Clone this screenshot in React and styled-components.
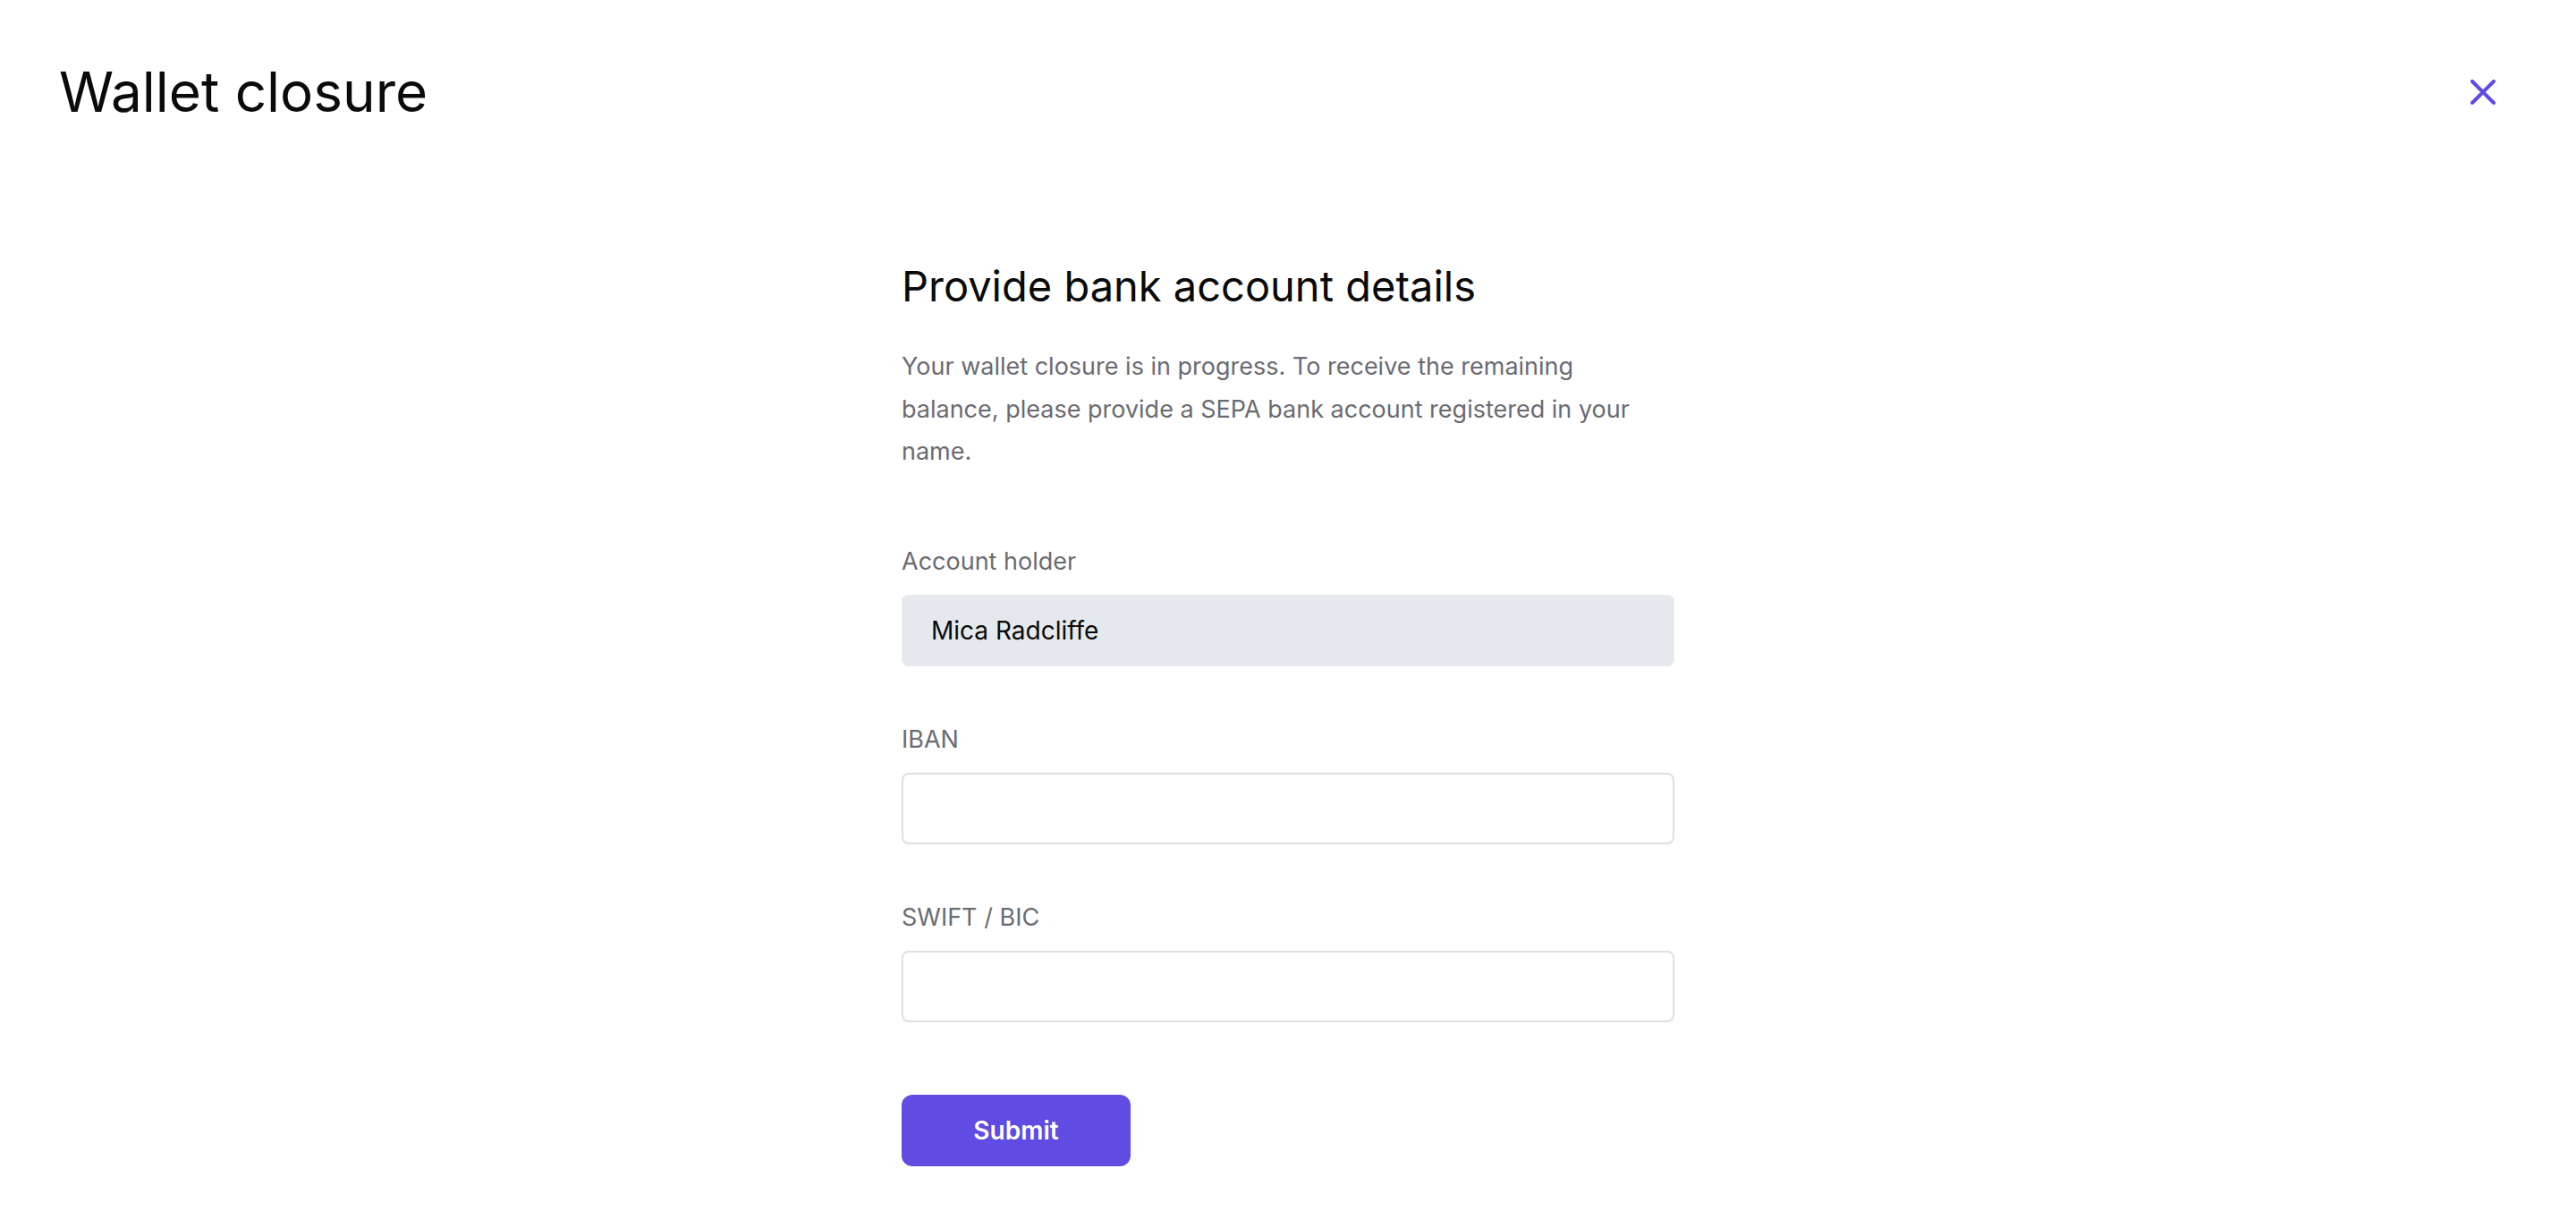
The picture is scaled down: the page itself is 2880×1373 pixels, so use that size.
import React, { useState } from "react";
import styled, { createGlobalStyle } from "styled-components";

const GlobalStyle = createGlobalStyle`
    html, body {
        margin: 0;
        padding: 0;
        background: #ffffff;
    }
    body {
        font-family: Inter, "Noto Sans", sans-serif;
        color: #000000;
    }
    * { box-sizing: border-box; }
`;

const Page = styled.div`
    min-height: 100vh;
    background: #ffffff;
`;

const Header = styled.header`
    display: flex;
    align-items: center;
    justify-content: space-between;
    padding: 64px 80px 0 66px;
`;

const Title = styled.h1`
    margin: 0;
    font-size: 62px;
    line-height: 78px;
    font-weight: 400;
    color: #0a0a0a;
`;

const CloseButton = styled.button`
    width: 48px;
    height: 48px;
    display: flex;
    align-items: center;
    justify-content: center;
    padding: 0;
    border: none;
    background: transparent;
    cursor: pointer;
`;

const Main = styled.main`
    width: 864px;
    margin: 0 auto;
    padding: 150px 0 60px;
`;

const Heading = styled.h2`
    margin: 0;
    font-size: 47px;
    line-height: 56px;
    font-weight: 400;
    color: #0a0a0a;
`;

const Intro = styled.p`
    margin: 38px 0 0;
    font-size: 27px;
    line-height: 47.6px;
    color: #6b6b72;
    width: 840px;
`;

const Form = styled.form`
    display: flex;
    flex-direction: column;
    gap: 58px;
    margin-top: 75px;
`;

const Field = styled.div`
    display: flex;
    flex-direction: column;
    gap: 13px;
`;

const Label = styled.label`
    font-size: 27px;
    line-height: 48px;
    color: #6b6b72;
`;

const Input = styled.input`
    height: 80px;
    width: 100%;
    padding: 0 31px;
    font-family: inherit;
    font-size: 28px;
    color: #0a0a0a;
    border-radius: 8px;
    border: 2px solid ${p => (p.readOnly ? "#e5e8ec" : "#dcdfe4")};
    background: ${p => (p.readOnly ? "#e5e8ec" : "#ffffff")};
    outline: none;
`;

const Submit = styled.button`
    margin-top: 23px;
    width: 256px;
    height: 80px;
    border: none;
    border-radius: 12px;
    background: #604be3;
    color: #ffffff;
    font-family: inherit;
    font-size: 28px;
    font-weight: 600;
    cursor: pointer;
`;

const App = () => {
    const [iban, setIban] = useState('');
    const [bic, setBic] = useState('');

    return (
        <Page>
            <GlobalStyle />
            <Header>
                <Title>Wallet closure</Title>
                <CloseButton aria-label="Close">
                    <svg width="28" height="28" viewBox="0 0 28 28" fill="none">
                        <path d="M2 2 L26 26 M26 2 L2 26" stroke="#5f4be3" strokeWidth="4" strokeLinecap="round" />
                    </svg>
                </CloseButton>
            </Header>
            <Main>
                <Heading>Provide bank account details</Heading>
                <Intro>
                    Your wallet closure is in progress. To receive the remaining balance, please provide a SEPA bank account registered in your name.
                </Intro>
                <Form onSubmit={(e) => e.preventDefault()}>
                    <Field>
                        <Label>Account holder</Label>
                        <Input readOnly value="Mica Radcliffe" />
                    </Field>
                    <Field>
                        <Label>IBAN</Label>
                        <Input value={iban} onChange={(e) => setIban(e.target.value)} />
                    </Field>
                    <Field>
                        <Label>SWIFT / BIC</Label>
                        <Input value={bic} onChange={(e) => setBic(e.target.value)} />
                    </Field>
                    <div>
                        <Submit type="submit">Submit</Submit>
                    </div>
                </Form>
            </Main>
        </Page>
    );
};

export default App;
